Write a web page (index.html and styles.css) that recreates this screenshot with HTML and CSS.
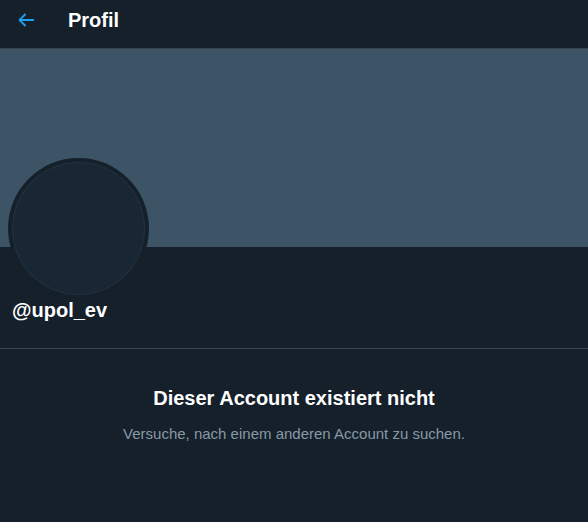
FILE: index.html
```html
<!DOCTYPE html>
<html lang="de">
<head>
<meta charset="utf-8">
<link rel="stylesheet" href="styles.css">
</head>
<body>
<div class="page">
  <header class="topbar">
    <div class="back">
      <svg viewBox="0 0 24 24" class="back-icon"><path d="M20 11H7.414l4.293-4.293c.39-.39.39-1.023 0-1.414s-1.023-.39-1.414 0l-6 6c-.39.39-.39 1.023 0 1.414l6 6c.195.195.45.293.707.293s.512-.098.707-.293c.39-.39.39-1.023 0-1.414L7.414 13H20c.553 0 1-.447 1-1s-.447-1-1-1z"/></svg>
    </div>
    <h1 class="title">Profil</h1>
  </header>
  <div class="banner"></div>
  <div class="profile">
    <div class="avatar"><div class="avatar-inner"></div></div>
    <div class="handle">@upol_ev</div>
  </div>
  <div class="empty">
    <div class="empty-title">Dieser Account existiert nicht</div>
    <div class="empty-text">Versuche, nach einem anderen Account zu suchen.</div>
  </div>
</div>
</body>
</html>
```
FILE: styles.css
```css
html, body {
  margin: 0;
  padding: 0;
  background: #15202b;
}
body {
  font-family: "Liberation Sans", Arial, sans-serif;
  color: #ffffff;
}
.page {
  width: 588px;
  min-height: 522px;
}
.topbar {
  height: 48px;
  display: flex;
  align-items: center;
  border-bottom: 1px solid #38444d;
  box-sizing: content-box;
}
.back {
  width: 22px;
  height: 22px;
  margin-left: 15px;
  margin-top: -8px;
  display: flex;
}
.back-icon {
  width: 22px;
  height: 22px;
  fill: #1da1f2;
}
.title {
  margin: -9px 0 0 31px;
  font-size: 20px;
  font-weight: 700;
  line-height: 24px;
}
.banner {
  height: 198px;
  background: #3d5466;
}
.profile {
  height: 101px;
  padding-left: 8px;
  border-bottom: 1px solid #38444d;
  display: flex;
  flex-direction: column;
}
.avatar {
  width: 141px;
  height: 141px;
  margin-top: -89px;
  border-radius: 50%;
  background: #15202b;
  padding: 4px;
  box-sizing: border-box;
}
.avatar-inner {
  width: 100%;
  height: 100%;
  border-radius: 50%;
  background: #192734;
  box-shadow: inset 0 0 0 1px #22313f;
}
.handle {
  margin: -1px 0 0 4px;
  font-size: 20px;
  font-weight: 700;
  line-height: 24px;
}
.empty {
  display: flex;
  flex-direction: column;
  align-items: center;
  padding-top: 37px;
}
.empty-title {
  font-size: 20px;
  font-weight: 700;
  line-height: 24px;
}
.empty-text {
  margin-top: 14px;
  font-size: 15px;
  line-height: 20px;
  color: #8899a6;
}
```
